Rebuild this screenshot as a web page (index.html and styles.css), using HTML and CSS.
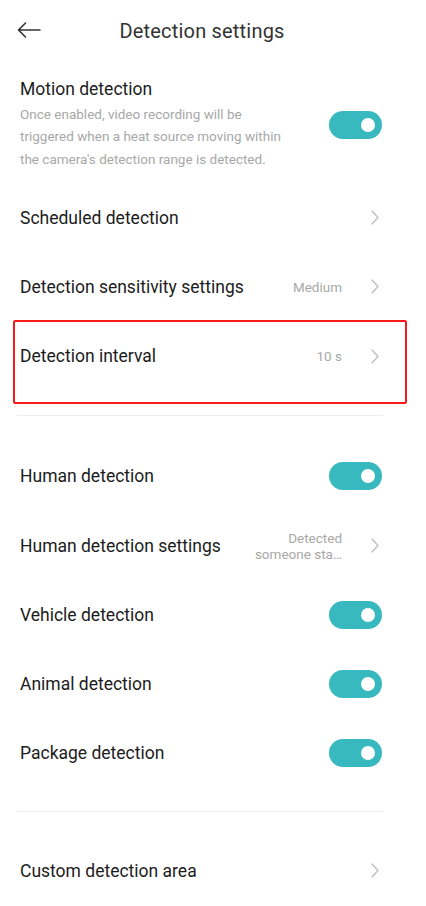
FILE: index.html
```html
<!DOCTYPE html>
<html>
<head>
<meta charset="utf-8">
<link rel="stylesheet" href="styles.css">
</head>
<body>
<div class="page">
  <header class="header">
    <svg class="back" width="24" height="16" viewBox="0 0 24 16"><path d="M23 8H1.5M8.5 1L1.5 8L8.5 15" fill="none" stroke="#333" stroke-width="1.6" stroke-linecap="round" stroke-linejoin="round"/></svg>
    <h1 class="title">Detection settings</h1>
  </header>

  <section class="motion">
    <div class="motion-text">
      <div class="label">Motion detection</div>
      <p class="desc">Once enabled, video recording will be triggered when a heat source moving within the camera's detection range is detected.</p>
    </div>
    <span class="toggle"></span>
  </section>

  <div class="row"><span class="label">Scheduled detection</span><svg class="chev" width="8" height="15" viewBox="0 0 8 15"><path d="M1 1L7 7.5L1 14" fill="none" stroke="#bdbdbd" stroke-width="1.3" stroke-linecap="round" stroke-linejoin="round"/></svg></div>
  <div class="row"><span class="label">Detection sensitivity settings</span><span class="value">Medium</span><svg class="chev" width="8" height="15" viewBox="0 0 8 15"><path d="M1 1L7 7.5L1 14" fill="none" stroke="#bdbdbd" stroke-width="1.3" stroke-linecap="round" stroke-linejoin="round"/></svg></div>
  <div class="row highlight"><span class="label">Detection interval</span><span class="value">10 s</span><svg class="chev" width="8" height="15" viewBox="0 0 8 15"><path d="M1 1L7 7.5L1 14" fill="none" stroke="#bdbdbd" stroke-width="1.3" stroke-linecap="round" stroke-linejoin="round"/></svg></div>

  <hr class="divider">

  <div class="row"><span class="label">Human detection</span><span class="toggle"></span></div>
  <div class="row"><span class="label">Human detection settings</span><span class="value two">Detected<br>someone sta…</span><svg class="chev" width="8" height="15" viewBox="0 0 8 15"><path d="M1 1L7 7.5L1 14" fill="none" stroke="#bdbdbd" stroke-width="1.3" stroke-linecap="round" stroke-linejoin="round"/></svg></div>
  <div class="row"><span class="label">Vehicle detection</span><span class="toggle"></span></div>
  <div class="row"><span class="label">Animal detection</span><span class="toggle"></span></div>
  <div class="row"><span class="label">Package detection</span><span class="toggle"></span></div>

  <hr class="divider last">

  <div class="row"><span class="label">Custom detection area</span><svg class="chev" width="8" height="15" viewBox="0 0 8 15"><path d="M1 1L7 7.5L1 14" fill="none" stroke="#bdbdbd" stroke-width="1.3" stroke-linecap="round" stroke-linejoin="round"/></svg></div>
</div>
</body>
</html>
```

FILE: styles.css
```css
* { box-sizing: border-box; }
html, body { margin: 0; padding: 0; background: #fff; }
body { font-family: Roboto, "Noto Sans", sans-serif; color: #1c1c1c; }
.page { width: 426px; padding: 0 0 0 20px; }

.header { position: relative; height: 62px; display: flex; align-items: center; justify-content: center; margin-left: -20px; padding-right: 22px; }
.back { position: absolute; left: 17px; top: 22px; }
.title { margin: 0; font-size: 20px; font-weight: 400; color: #333; letter-spacing: 0.2px; }

.motion { display: flex; align-items: center; height: 121px; padding-right: 44px; padding-top: 4px; }
.motion-text { flex: 1; }
.motion .label { font-size: 17.5px; margin-bottom: 4px; }
.desc { margin: 0; width: 276px; font-size: 13.5px; line-height: 22.5px; color: #a8a8a8; }

.row { position: relative; display: flex; align-items: center; height: 69.25px; padding-right: 44px; }
.label { font-size: 17.5px; font-weight: 400; flex: 1; }
.value { font-size: 13.5px; color: #a8a8a8; margin-right: 29px; text-align: right; }
.value.two { line-height: 16px; }
.chev { display: block; margin-right: 3px; }

.toggle { position: relative; width: 53px; height: 28px; border-radius: 14px; background: #38b9bf; }
.toggle::after { content: ""; position: absolute; right: 7px; top: 7px; width: 14px; height: 14px; border-radius: 50%; background: #fff; }

.highlight::before { content: ""; position: absolute; left: -7px; right: 19px; top: -2px; bottom: -13px; border: 2px solid #f51b1b; border-radius: 2px; }

.divider { border: 0; height: 1px; background: #eeeeee; margin: 24px 43px 26px -3px; }
.divider.last { margin: 23px 43px 24px -3px; }
```
